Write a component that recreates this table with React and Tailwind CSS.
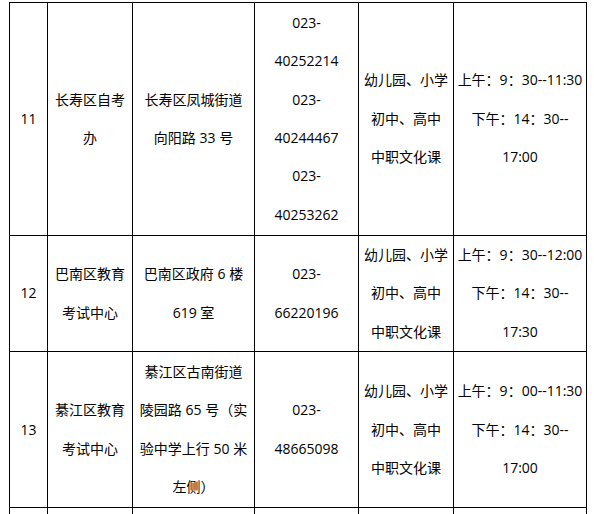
import React from "react";

const rows = [
  {
    h: "h-[233px]",
    no: "11",
    name: ["长寿区自考", "办"],
    addr: ["长寿区凤城街道", "向阳路 33 号"],
    phone: ["023-", "40252214", "023-", "40244467", "023-", "40253262"],
    time: ["上午：9：30--11:30", "下午：14：30--", "17:00"],
  },
  {
    h: "h-[116px]",
    no: "12",
    name: ["巴南区教育", "考试中心"],
    addr: ["巴南区政府 6 楼", "619 室"],
    phone: ["023-", "66220196"],
    time: ["上午：9：30--12:00", "下午：14：30--", "17:30"],
  },
  {
    h: "h-[156px]",
    no: "13",
    name: ["綦江区教育", "考试中心"],
    addr: ["綦江区古南街道", "陵园路 65 号（实", "验中学上行 50 米", "左侧）"],
    phone: ["023-", "48665098"],
    time: ["上午：9：00--11:30", "下午：14：30--", "17:00"],
  },
];

const Lines = ({ items }) => (
  <div className="flex flex-col items-center">
    {items.map((t, i) => (
      <div key={i} className="whitespace-nowrap leading-[38.4px]">
        {t}
      </div>
    ))}
  </div>
);

export default function App() {
  return (
    <div
      className="bg-white w-[594px] h-[514px] overflow-hidden text-[14px] text-black"
      style={{ fontFamily: '"Open Sans", "Noto Sans CJK SC", sans-serif' }}
    >
      <table className="ml-[9px] mt-[2px] border-collapse table-fixed w-[577px]">
        <colgroup>
          <col className="w-[38px]" />
          <col className="w-[85px]" />
          <col className="w-[122px]" />
          <col className="w-[104px]" />
          <col className="w-[95px]" />
          <col className="w-[133px]" />
        </colgroup>
        <tbody>
          {rows.map((r) => (
            <tr key={r.no} className={r.h}>
              <td className="border border-black p-0 text-center align-middle">
                <Lines items={[r.no]} />
              </td>
              <td className="border border-black p-0 text-center align-middle">
                <Lines items={r.name} />
              </td>
              <td className="border border-black p-0 text-center align-middle">
                <Lines items={r.addr} />
              </td>
              <td className="border border-black p-0 text-center align-middle">
                <Lines items={r.phone} />
              </td>
              <td className="border border-black p-0 text-center align-middle">
                <Lines items={["幼儿园、小学", "初中、高中", "中职文化课"]} />
              </td>
              <td className="border border-black p-0 text-center align-middle">
                <Lines items={r.time} />
              </td>
            </tr>
          ))}
          <tr className="h-[40px]">
            <td className="border border-black p-0" />
            <td className="border border-black p-0" />
            <td className="border border-black p-0" />
            <td className="border border-black p-0" />
            <td className="border border-black p-0" />
            <td className="border border-black p-0" />
          </tr>
        </tbody>
      </table>
    </div>
  );
}
